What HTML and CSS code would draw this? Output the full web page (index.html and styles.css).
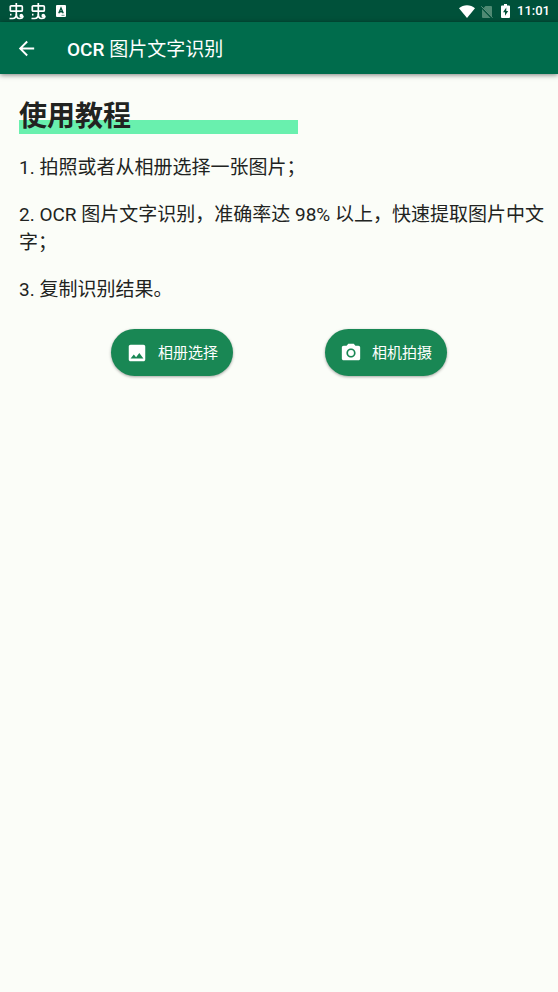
FILE: index.html
```html
<!DOCTYPE html>
<html lang="zh-CN">
<head>
<meta charset="utf-8">
<meta name="viewport" content="width=device-width, initial-scale=1">
<title>OCR 图片文字识别</title>
<link rel="stylesheet" href="styles.css">
</head>
<body>
<div class="status">
  <div class="status-group notices">
    <svg class="bug" viewBox="0 0 16 17" aria-hidden="true"><path d="M8.300 0v11.500M3.300 2.800h10a1 1 0 0 1 1 1v3.400a1 1 0 0 1-1 1h-10a1 1 0 0 1-1-1V3.800a1 1 0 0 1 1-1z"/><path d="M2 11.700h1.500M1.500 15.500h3c2.300 0 3.800-1.500 3.800-4.500 0 3 1.200 4.500 3.200 4.500 2.500 0 3.500-1.200 3.500-2.700"/><circle cx="13.300" cy="12.700" r="1"/></svg>
    <svg class="bug" viewBox="0 0 16 17" aria-hidden="true"><path d="M8.300 0v11.500M3.300 2.800h10a1 1 0 0 1 1 1v3.400a1 1 0 0 1-1 1h-10a1 1 0 0 1-1-1V3.800a1 1 0 0 1 1-1z"/><path d="M2 11.700h1.500M1.500 15.500h3c2.300 0 3.800-1.500 3.800-4.500 0 3 1.200 4.500 3.200 4.500 2.500 0 3.500-1.200 3.500-2.700"/><circle cx="13.300" cy="12.700" r="1"/></svg>
    <svg class="badge-a" viewBox="0 0 10 12" aria-hidden="true"><rect width="10" height="12" rx="1" fill="#fff"/><path d="M2.800 8.300 5 3l2.200 5.300M3.500 6.700h3" fill="none" stroke="#00513a" stroke-width="1.400"/><path d="M5.500 10.300h3" stroke="#00513a" stroke-width=".6"/></svg>
  </div>
  <div class="status-group">
    <svg class="wifi" viewBox="0 0 16 13" aria-hidden="true"><path d="M8 13 0 3.200C2.200 1.300 5 .3 8 .3s5.800 1 8 2.900z" fill="#fff"/></svg>
    <svg class="sim" viewBox="0 0 12 13" aria-hidden="true"><path d="M4.500 1H10a1 1 0 0 1 1 1v10L2.500 3zM1 4l8.500 9H2a1 1 0 0 1-1-1z" fill="#4f8a73"/><path d="m.3 1.300 11.200 11.400" stroke="#5f9580" stroke-width="1"/></svg>
    <svg class="battery" viewBox="0 0 9 14" aria-hidden="true"><path d="M3 0h3v1.500h2a1 1 0 0 1 1 1V13a1 1 0 0 1-1 1H1a1 1 0 0 1-1-1V2.500a1 1 0 0 1 1-1h2z" fill="#fff"/><path d="M5.300 3.500 2 8.300h2v3.500L7.200 7H5.300z" fill="#00513a"/></svg>
    <time class="clock">11:01</time>
  </div>
</div>
<header class="appbar">
  <button class="back" type="button" aria-label="返回">
    <svg viewBox="0 0 24 24" aria-hidden="true"><path d="M20 11H7.830l5.590-5.590L12 4l-8 8 8 8 1.410-1.410L7.830 13H20z"/></svg>
  </button>
  <h1 class="title"><span class="latin">OCR</span> 图片文字识别</h1>
</header>
<main class="content">
  <h2 class="heading">使用教程</h2>
  <p>1. 拍照或者从相册选择一张图片；</p>
  <p>2. OCR 图片文字识别，准确率达 98% 以上，快速提取图片中文字；</p>
  <p>3. 复制识别结果。</p>
  <div class="actions">
    <button class="action" type="button">
      <svg viewBox="0 0 24 24" aria-hidden="true"><path d="M21 19V5c0-1.100-.9-2-2-2H5c-1.100 0-2 .9-2 2v14c0 1.100.9 2 2 2h14c1.100 0 2-.9 2-2zM8.500 13.500l2.500 3.010L14.500 12l4.500 6H5z"/></svg>
      相册选择
    </button>
    <button class="action" type="button">
      <svg viewBox="0 0 24 24" aria-hidden="true"><circle cx="12" cy="12" r="3.200"/><path d="M9 2 7.170 4H4c-1.100 0-2 .9-2 2v12c0 1.100.9 2 2 2h16c1.100 0 2-.9 2-2V6c0-1.100-.9-2-2-2h-3.170L15 2zm3 15c-2.760 0-5-2.240-5-5s2.240-5 5-5 5 2.240 5 5-2.240 5-5 5z"/></svg>
      相机拍摄
    </button>
  </div>
</main>
</body>
</html>
```
FILE: styles.css
```css
* {
  box-sizing: border-box;
}

body {
  margin: 0;
  min-height: 100vh;
  background: #fbfdf8;
  color: #212321;
  font-family: Roboto, "Noto Sans CJK SC", sans-serif;
}

button {
  border: 0;
  font-family: inherit;
  cursor: pointer;
}

svg {
  display: block;
  flex: none;
}

.status {
  display: flex;
  justify-content: space-between;
  align-items: center;
  height: 22px;
  padding: 0 8px;
  background: #00513a;
  color: #fff;
}

.status-group {
  display: flex;
  align-items: center;
}

.notices {
  gap: 6px;
}

.bug {
  width: 16px;
  height: 17px;
  fill: none;
  stroke: #fff;
  stroke-width: 1.7;
}

.badge-a {
  width: 10px;
  height: 12px;
  margin-left: 4px;
}

.wifi {
  width: 16px;
  height: 13px;
}

.sim {
  width: 12px;
  height: 13px;
  margin-left: 6px;
}

.battery {
  width: 9px;
  height: 14px;
  margin-left: 8px;
}

.clock {
  margin-left: 7px;
  font-size: 13px;
  font-weight: 500;
  line-height: 22px;
}

.appbar {
  display: flex;
  align-items: center;
  gap: 21px;
  height: 52px;
  padding: 1px 7px 0;
  background: #006c4c;
  color: #fff;
  box-shadow: 0 1px 5px rgba(0, 0, 0, 0.5);
}

.back {
  padding: 8px;
  background: none;
}

.back svg {
  width: 23px;
  height: 23px;
  fill: #fff;
}

.title {
  margin: 0;
  padding-top: 2px;
  font-size: 19px;
  font-weight: 400;
  line-height: 28px;
}

.latin {
  font-weight: 500;
}

.content {
  padding: 25px 12px 24px 19px;
}

.heading {
  width: 279px;
  max-width: 100%;
  margin: 0 0 20px;
  background: linear-gradient(#69f0ae, #69f0ae) left bottom / 100% 14px no-repeat;
  font-size: 28px;
  font-weight: 700;
  line-height: 35px;
}

p {
  margin: 19px 0;
  font-size: 19px;
  line-height: 28px;
}

.actions {
  display: flex;
  justify-content: space-evenly;
  margin: 25px 7px 0 0;
}

.action {
  display: flex;
  align-items: center;
  gap: 10px;
  height: 47px;
  padding: 1px 15px 0;
  border-radius: 24px;
  background: #198754;
  color: #fff;
  font-size: 15px;
  line-height: 22px;
  box-shadow: 0 1px 3px rgba(0, 0, 0, 0.35);
}

.action svg {
  width: 22px;
  height: 22px;
  fill: #fff;
}
```
